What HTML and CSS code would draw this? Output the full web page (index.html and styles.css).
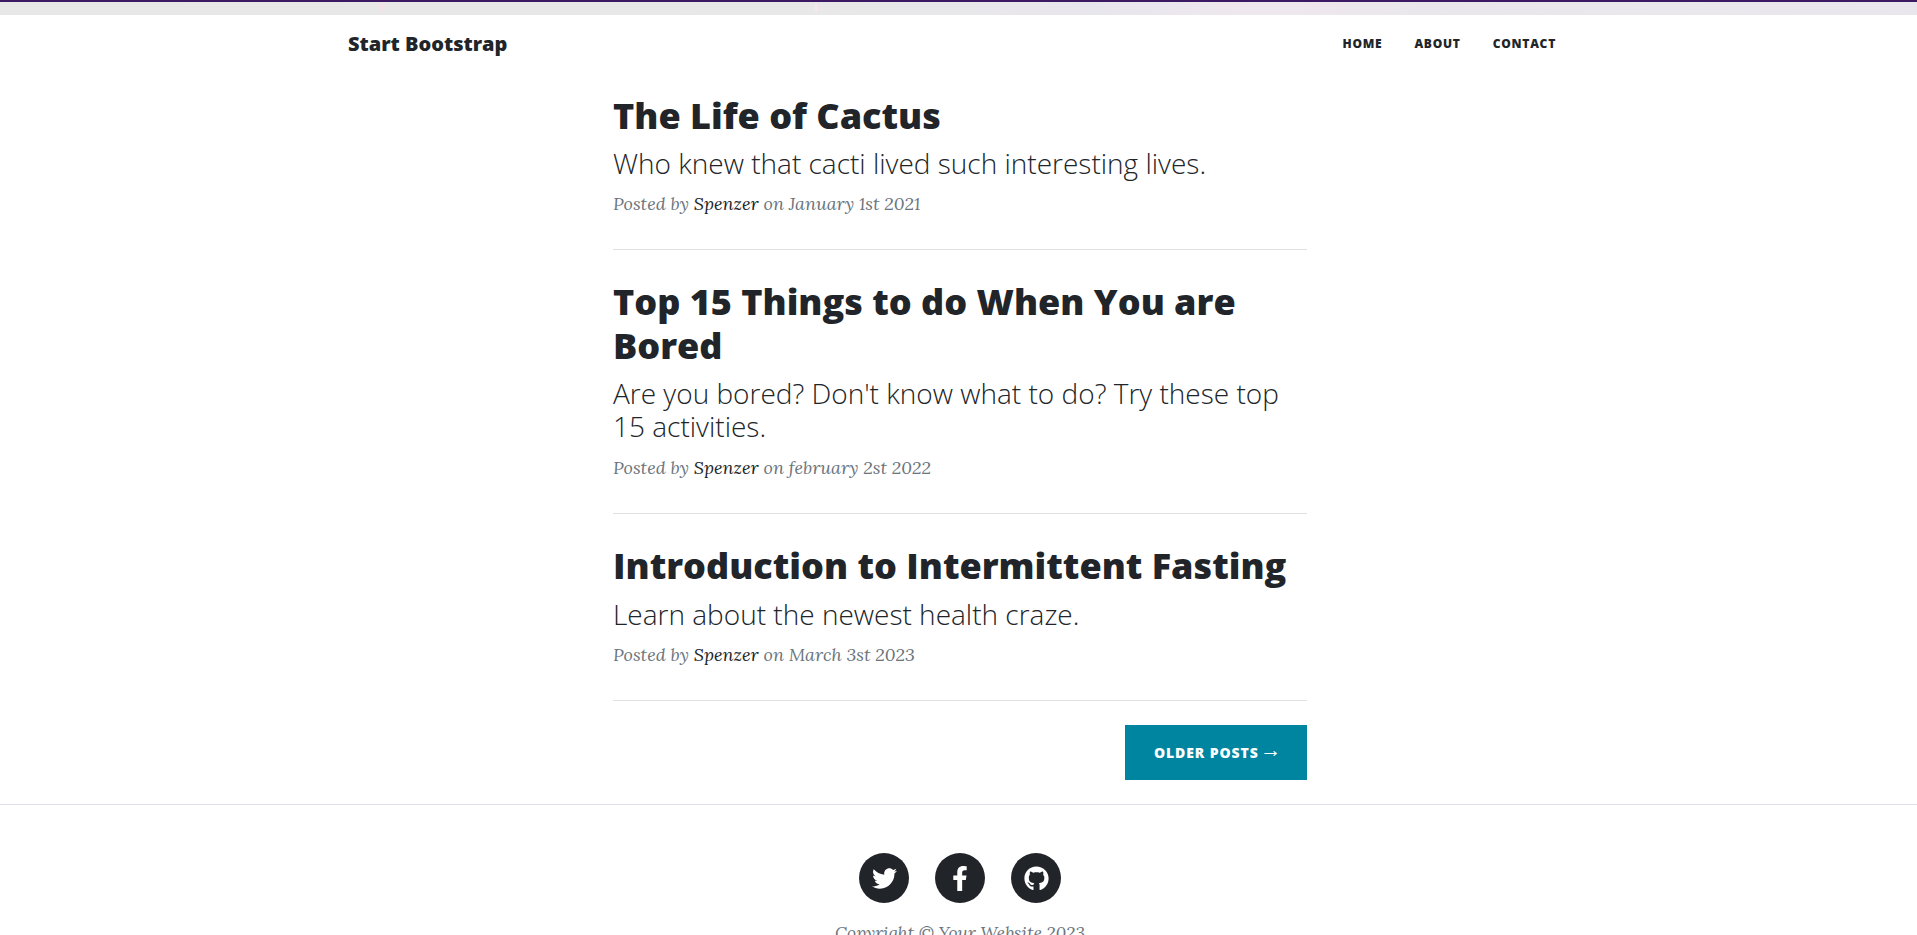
FILE: index.html
```
<!DOCTYPE html>
<html lang="en">
<head>
<meta charset="utf-8">
<title>Clean Blog</title>
<link rel="stylesheet" href="styles.css">
</head>
<body>
<div class="page">
  <div class="masthead-edge"></div>
  <nav class="navbar">
    <a class="brand">Start Bootstrap</a>
    <div class="links"><a>Home</a><a>About</a><a>Contact</a></div>
  </nav>
  <main class="posts">
    <article class="post">
      <h2>The Life of Cactus</h2>
      <h3>Who knew that cacti lived such interesting lives.</h3>
      <p class="meta">Posted by <a>Spenzer</a> on January 1st 2021</p>
    </article>
    <article class="post">
      <h2>Top 15 Things to do When You are Bored</h2>
      <h3>Are you bored? Don't know what to do? Try these top 15 activities.</h3>
      <p class="meta">Posted by <a>Spenzer</a> on february 2st 2022</p>
    </article>
    <article class="post">
      <h2>Introduction to Intermittent Fasting</h2>
      <h3>Learn about the newest health craze.</h3>
      <p class="meta">Posted by <a>Spenzer</a> on March 3st 2023</p>
    </article>
    <div class="pager"><a class="button">Older Posts <span class="arrow">→</span></a></div>
  </main>
  <footer class="footer">
    <div class="social">
      <a><svg width="25" height="25" viewBox="0 0 512 512"><path d="M459.37 151.716c.325 4.548.325 9.097.325 13.645 0 138.72-105.583 298.558-298.558 298.558-59.452 0-114.68-17.219-161.137-47.106 8.447.974 16.568 1.299 25.34 1.299 49.055 0 94.213-16.568 130.274-44.832-46.132-.975-84.792-31.188-98.112-72.772 6.498.974 12.995 1.624 19.818 1.624 9.421 0 18.843-1.3 27.614-3.573-48.081-9.747-84.143-51.98-84.143-102.985v-1.299c13.969 7.797 30.214 12.67 47.431 13.319-28.264-18.843-46.781-51.005-46.781-87.391 0-19.492 5.197-37.36 14.294-52.954 51.655 63.675 129.3 105.258 216.365 109.807-1.624-7.797-2.599-15.918-2.599-24.04 0-57.828 46.782-104.934 104.934-104.934 30.213 0 57.502 12.67 76.67 33.137 23.715-4.548 46.456-13.32 66.599-25.34-7.798 24.366-24.366 44.833-46.132 57.827 21.117-2.273 41.584-8.122 60.426-16.243-14.292 20.791-32.161 39.308-52.628 54.253z"/></svg></a>
      <a><svg width="16" height="25" viewBox="0 0 320 512"><path d="M279.14 288l14.22-92.66h-88.91v-60.13c0-25.35 12.42-50.06 52.24-50.06h40.42V6.26S260.43 0 225.36 0c-73.22 0-121.08 44.38-121.08 124.72v70.62H22.89V288h81.39v224h100.17V288z"/></svg></a>
      <a><svg width="25" height="25" viewBox="0 0 496 512"><path d="M244.8 8C106.1 8 0 113.3 0 252c0 110.9 69.8 205.8 169.5 239.2 12.8 2.3 17.3-5.6 17.3-12.1 0-6.2-.3-40.4-.3-61.4 0 0-70 15-84.7-29.8 0 0-11.4-29.1-27.8-36.6 0 0-22.9-15.7 1.6-15.4 0 0 24.9 2 38.6 25.8 21.9 38.6 58.6 27.5 72.9 20.9 2.3-16 8.8-27.1 16-33.7-55.9-6.2-112.3-14.3-112.3-110.5 0-27.5 7.6-41.3 23.6-58.9-2.6-6.5-11.1-33.3 2.6-67.9 20.9-6.5 69 27 69 27 20-5.6 41.5-8.5 62.8-8.5s42.8 2.9 62.8 8.5c0 0 48.1-33.6 69-27 13.7 34.7 5.2 61.4 2.6 67.9 16 17.7 25.8 31.5 25.8 58.9 0 96.5-58.9 104.2-114.8 110.5 9.2 7.9 17 22.9 17 46.4 0 33.7-.3 75.4-.3 83.6 0 6.5 4.6 14.4 17.3 12.1C428.2 457.8 496 362.9 496 252 496 113.3 383.5 8 244.8 8z"/></svg></a>
    </div>
    <p class="copyright">Copyright © Your Website 2023</p>
  </footer>
</div>
</body>
</html>
```
FILE: styles.css
```
* { box-sizing: border-box; }
html, body { height: 100%; margin: 0; overflow: hidden; background: #fff; }
body { color: #212529; font-family: "Open Sans", sans-serif; }
h2, h3, p { margin: 0; }
.page { width: 1920px; }
.masthead-edge {
  height: 15px;
  border-top: 2px solid #3b1a63;
  background:
    radial-gradient(ellipse 4px 7px at 382px 5px, #f3e2e6 40%, transparent),
    radial-gradient(ellipse 2px 6px at 816px 6px, #f6e8ee 40%, transparent),
    linear-gradient(90deg, #e7e7e7 0, #e8e8e9 45%, #e8e6ed 57%, #efe7ee 66%, #eae7ec 74%, #e9e7ed 100%);
}
.navbar {
  width: 1224px;
  height: 57px;
  margin: 0 auto;
  display: flex;
  justify-content: space-between;
  align-items: center;
  padding-top: 1px;
}
.brand { font-size: 20px; font-weight: 800; line-height: 30px; }
.links { display: flex; }
.links a {
  padding: 0 16px;
  font-size: 12px;
  font-weight: 800;
  line-height: 18px;
  letter-spacing: .75px;
  text-transform: uppercase;
}
.posts { width: 694px; margin: 0 auto; padding-top: 21.6px; }
.post { border-bottom: 1px solid #dee0e2; padding-bottom: 32px; }
.post:first-child { padding-bottom: 31.7px; }
.post + .post { padding-top: 30.4px; }
.post h2 { font-size: 36px; font-weight: 800; line-height: 1.2; margin-bottom: 10px; }
.post h3 { font-size: 28px; font-weight: 300; line-height: 1.2; margin-bottom: 10px; }
.meta, .copyright {
  font-family: Lora, "Liberation Serif", serif;
  font-size: 18px;
  font-style: italic;
  line-height: 27px;
  color: #6c757d;
}
.meta a { color: #212529; }
.pager { display: flex; justify-content: flex-end; padding: 24px 0; }
.button {
  width: 182px;
  height: 55px;
  padding-left: 29px;
  line-height: 55px;
  white-space: nowrap;
  background: #0085a1;
  color: #fff;
  font-size: 14px;
  font-weight: 800;
  letter-spacing: .9px;
  text-transform: uppercase;
}
.arrow {
  margin-left: -3px;
  font-family: "Liberation Serif", serif;
  font-size: 21px;
  font-weight: 400;
  line-height: 0;
  vertical-align: 1px;
}
.footer { border-top: 1px solid #dee2e6; padding-top: 48px; text-align: center; }
.social { display: flex; justify-content: center; gap: 26px; }
.social a {
  width: 50px;
  height: 50px;
  border-radius: 50%;
  background: #212529;
  display: flex;
  align-items: center;
  justify-content: center;
}
.social svg { fill: #fff; }
.copyright { margin-top: 16px; font-size: 17.5px; }
```
